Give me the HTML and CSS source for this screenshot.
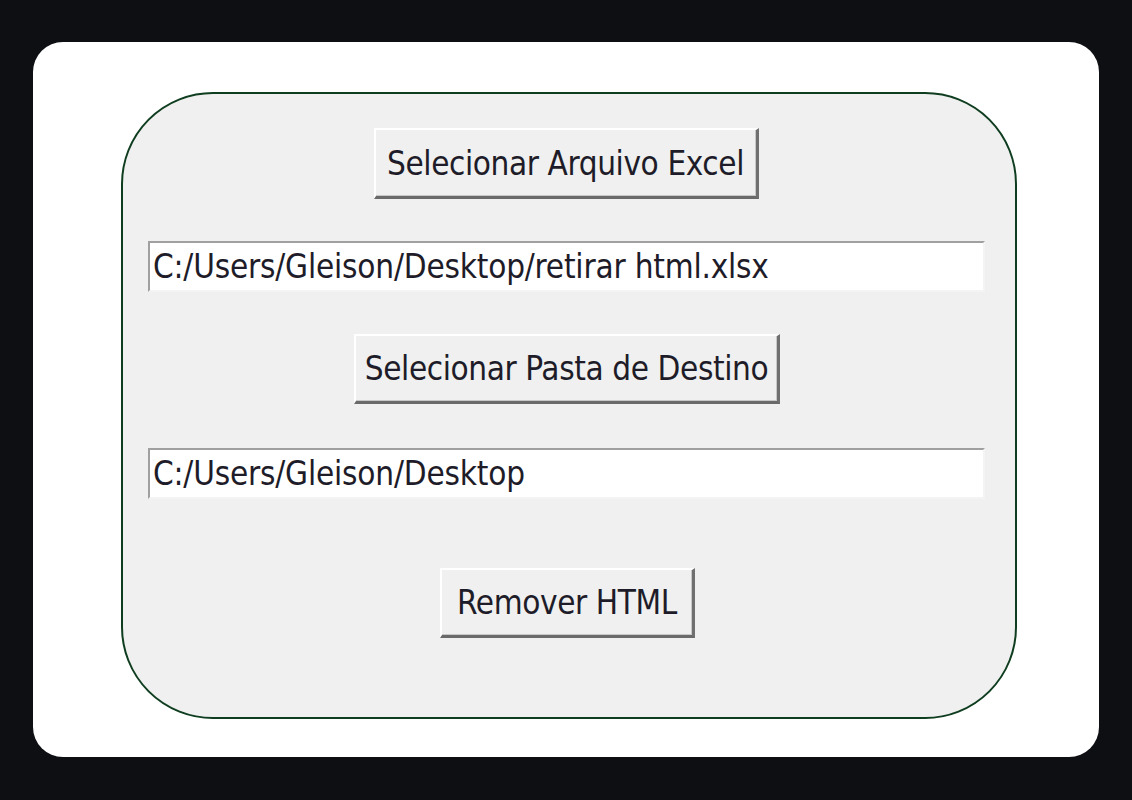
FILE: index.html
```html
<!DOCTYPE html>
<html lang="pt">
<head>
<meta charset="utf-8">
<title>Remover HTML</title>
<link rel="stylesheet" href="styles.css">
</head>
<body>
<div class="card">
  <div class="panel">
    <button class="btn btn-excel">Selecionar Arquivo Excel</button>
    <div class="entry entry-1">C:/Users/Gleison/Desktop/retirar html.xlsx</div>
    <button class="btn btn-pasta">Selecionar Pasta de Destino</button>
    <div class="entry entry-2">C:/Users/Gleison/Desktop</div>
    <button class="btn btn-remover">Remover HTML</button>
  </div>
</div>
</body>
</html>
```
FILE: styles.css
```css
html, body {
  margin: 0;
  padding: 0;
  background: #0e0f13;
  width: 1132px;
  height: 800px;
  overflow: hidden;
}
body {
  padding-top: 42px;
  box-sizing: border-box;
  font-family: "DejaVu Sans Condensed", "DejaVu Sans", sans-serif;
}
.card {
  margin-left: 33px;
  width: 1066px;
  height: 715px;
  background: #ffffff;
  border-radius: 30px;
  box-sizing: border-box;
  padding: 50px 82px 38px 88px;
}
.panel {
  width: 896px;
  height: 627px;
  box-sizing: border-box;
  border: 2px solid #0f3d1f;
  border-radius: 92px;
  background: #f0f0f0;
  display: flex;
  flex-direction: column;
  align-items: center;
  padding-top: 34px;
}
.btn {
  font-family: inherit;
  font-size: 33px;
  letter-spacing: -0.4px;
  color: #1e1c28;
  background: #f0f0f0;
  border: none;
  border-top: 2px solid #ffffff;
  border-left: 2px solid #ffffff;
  border-right: 3px solid #707070;
  border-bottom: 3px solid #6a6a6a;
  box-shadow: inset -1px -1px 0 #c8c8c8;
  padding: 0;
  margin: 0;
  height: 71px;
  display: flex;
  align-items: center;
  justify-content: center;
  box-sizing: border-box;
}
.btn-excel { width: 385px; margin-left: -6px; }
.btn-pasta { width: 426px; margin-top: 42px; height: 70px; margin-left: -4px; }
.btn-remover { width: 255px; margin-top: 69px; height: 70px; margin-left: -3px; }
.entry {
  align-self: flex-start;
  margin-left: 25px;
  width: 837px;
  height: 51px;
  box-sizing: border-box;
  background: #ffffff;
  border-top: 2px solid #a0a0a0;
  border-left: 2px solid #a0a0a0;
  border-right: 2px solid #f4f4f4;
  border-bottom: 2px solid #f4f4f4;
  font-size: 33px;
  letter-spacing: -0.2px;
  color: #1e1c28;
  padding-left: 3px;
  display: flex;
  align-items: center;
  white-space: nowrap;
}
.entry-1 { margin-top: 42px; }
.entry-2 { margin-top: 44px; }
```
